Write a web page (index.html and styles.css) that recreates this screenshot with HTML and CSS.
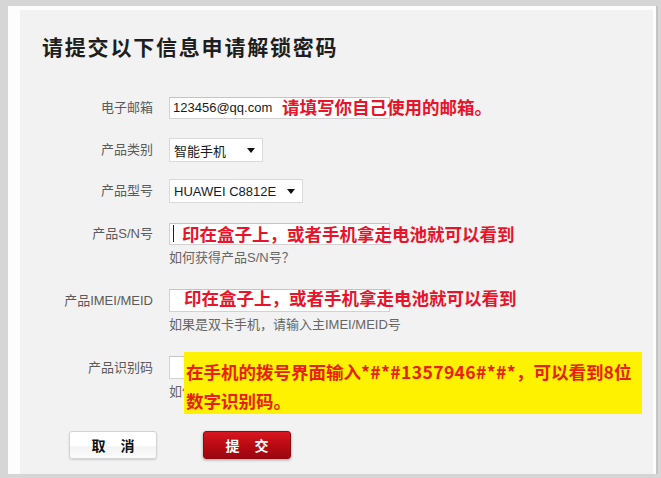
FILE: index.html
```html
<!DOCTYPE html>
<html lang="zh-CN">
<head>
<meta charset="utf-8">
<title>申请解锁密码</title>
<link rel="stylesheet" href="styles.css">
</head>
<body>
<div class="sheet">
  <div class="panel">
    <h1 class="title">请提交以下信息申请解锁密码</h1>
    <div class="form">
      <div class="row row-email">
        <div class="label">电子邮箱</div>
        <div class="field">
          <div class="input">123456@qq.com</div>
          <span class="note note-email">请填写你自己使用的邮箱。</span>
        </div>
      </div>
      <div class="row row-type">
        <div class="label label-select">产品类别</div>
        <div class="field">
          <div class="select select-type"><span>智能手机</span><i class="caret"></i></div>
        </div>
      </div>
      <div class="row row-model">
        <div class="label label-select">产品型号</div>
        <div class="field">
          <div class="select select-model"><span>HUAWEI C8812E</span><i class="caret"></i></div>
        </div>
      </div>
      <div class="row row-sn">
        <div class="label">产品S/N号</div>
        <div class="field">
          <div class="input"><span class="cursor"></span></div>
          <span class="note note-sn">印在盒子上，或者手机拿走电池就可以看到</span>
          <div class="hint">如何获得产品S/N号？</div>
        </div>
      </div>
      <div class="row row-imei">
        <div class="label label-tall">产品IMEI/MEID</div>
        <div class="field">
          <div class="input input-tall"></div>
          <span class="note note-imei">印在盒子上，或者手机拿走电池就可以看到</span>
          <div class="hint">如果是双卡手机，请输入主IMEI/MEID号</div>
        </div>
      </div>
      <div class="row row-id">
        <div class="label label-tall">产品识别码</div>
        <div class="field">
          <div class="input input-tall"></div>
          <div class="hint hint-clipped">如何获得产品识别码？</div>
          <div class="callout">在手机的拨号界面输入<span class="code">*#*#1357946#*#*</span>，可以看到8位<br>数字识别码。</div>
        </div>
      </div>
    </div>
    <div class="actions">
      <button class="btn btn-cancel">取 消</button>
      <button class="btn btn-submit">提 交</button>
    </div>
  </div>
</div>
</body>
</html>
```
FILE: styles.css
```css
html, body {
  margin: 0;
  padding: 0;
}
body {
  width: 661px;
  height: 478px;
  overflow: hidden;
  background: #d6d6d6;
  font-family: "Liberation Sans", "Noto Sans CJK SC", sans-serif;
}
.sheet {
  box-sizing: border-box;
  margin: 6px 0 0 8px;
  width: 650px;
  height: 468px;
  background: #fdfdfd;
  padding: 4px 3px 0 12px;
  border-right: 2px solid #c4c4c4;
}
.panel {
  box-sizing: border-box;
  height: 100%;
  background: #f2f2f2;
  padding: 21px 0 0 22px;
}
.title {
  margin: 0;
  font-family: "Noto Sans CJK SC", sans-serif;
  font-size: 21px;
  letter-spacing: 1.8px;
  line-height: 30px;
  font-weight: 700;
  color: #1e1e1e;
}
.form {
  margin-top: 36px;
}
.row {
  display: flex;
  align-items: flex-start;
  gap: 16px;
}
.row-type { margin-top: 19px; }
.row-model { margin-top: 17px; }
.row-sn { margin-top: 20px; }
.row-imei { margin-top: 22px; }
.row-id { margin-top: 22px; }
.label {
  width: 111px;
  flex: none;
  text-align: right;
  font-size: 13px;
  line-height: 22px;
  color: #5a5a5a;
}
.label-select { line-height: 24px; }
.label-tall { line-height: 23px; }
.field {
  position: relative;
}
.input {
  box-sizing: border-box;
  width: 221px;
  height: 22px;
  background: #fff;
  border: 1px solid #d2d2d2;
  border-top-color: #c4c4c4;
  font-size: 13px;
  line-height: 20px;
  padding-left: 3px;
  color: #1a1a1a;
}
.input-tall { height: 23px; }
.cursor {
  display: inline-block;
  width: 1px;
  height: 17px;
  margin-top: 1px;
  background: #222;
  vertical-align: top;
}
.select {
  box-sizing: border-box;
  height: 24px;
  background: #fff;
  border: 1px solid #dadada;
  display: flex;
  align-items: center;
  justify-content: space-between;
  padding: 0 7px 0 4px;
  font-size: 13px;
  color: #1a1a1a;
}
.select-type { width: 94px; }
.select-model { width: 134px; }
.caret {
  width: 0;
  height: 0;
  border-left: 4px solid transparent;
  border-right: 4px solid transparent;
  border-top: 5px solid #111;
}
.note {
  position: absolute;
  top: 0;
  white-space: nowrap;
  font-family: "Noto Sans CJK SC", sans-serif;
  font-weight: 700;
  font-size: 17.5px;
  line-height: 22px;
  color: #e8142a;
}
.note-email { left: 113px; top: -1px; }
.note-sn { left: 13px; }
.note-imei { left: 15px; top: -2px; }
.hint {
  margin-top: 4px;
  font-size: 13px;
  line-height: 18px;
  color: #666;
  white-space: nowrap;
}
.hint-clipped {
  width: 15px;
  overflow: hidden;
}
.callout {
  position: absolute;
  left: 15px;
  top: -4px;
  z-index: 2;
  box-sizing: border-box;
  width: 458px;
  height: 62px;
  padding: 5px 0 0 2px;
  background: #fff200;
  font-family: "Noto Sans CJK SC", sans-serif;
  font-weight: 700;
  font-size: 17.5px;
  line-height: 29px;
  color: #e8200e;
  white-space: nowrap;
}
.code {
  letter-spacing: 0.4px;
}
.actions {
  display: flex;
  gap: 46px;
  margin: 30px 0 0 27px;
}
.btn {
  box-sizing: border-box;
  width: 88px;
  height: 28px;
  border-radius: 3px;
  font-family: "Noto Sans CJK SC", sans-serif;
  font-weight: 700;
  font-size: 14px;
  letter-spacing: 6px;
  text-indent: 6px;
  padding: 0;
  cursor: pointer;
}
.btn-cancel {
  background: linear-gradient(#ffffff 0%, #ffffff 55%, #f3f3f3 56%, #fbfbfb 100%);
  border: 1px solid #d3d3d3;
  color: #111;
  box-shadow: 0 1px 2px rgba(0, 0, 0, 0.15);
}
.btn-submit {
  background: linear-gradient(#d81620 0%, #b90a13 50%, #9c0710 100%);
  border: 1px solid #8f0a10;
  color: #fff;
  box-shadow: 0 1px 3px rgba(0, 0, 0, 0.35);
}
```
